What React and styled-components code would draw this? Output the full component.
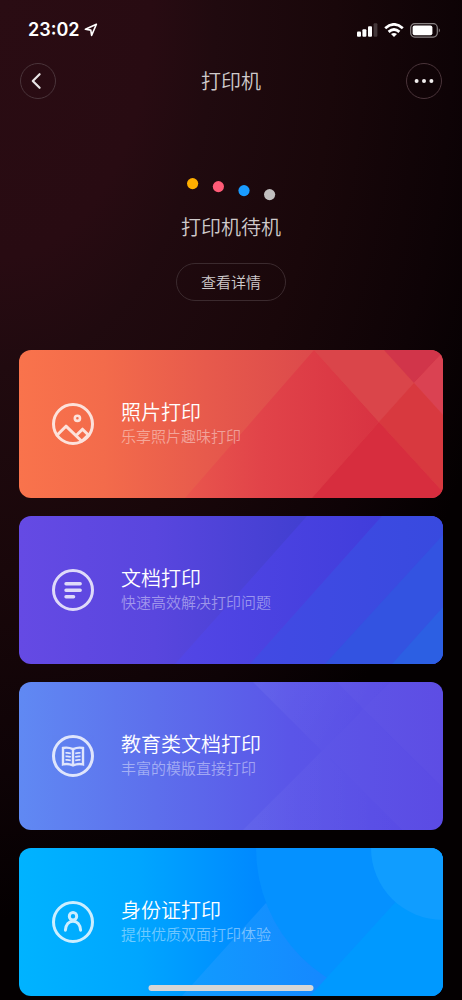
import React from 'react';
import styled, { createGlobalStyle } from 'styled-components';

const GlobalStyle = createGlobalStyle`
    * {
        box-sizing: border-box;
    }

    body {
        margin: 0;
        background-color: #040001;
    }

    button {
        font-family: inherit;
        cursor: pointer;
    }
`;

const Page = styled.div`
    min-height: 100vh;
    overflow: hidden;
    color: #cfcacb;
    font-family: 'Noto Sans CJK SC', 'Noto Sans', sans-serif;
    font-weight: 350;
    background: radial-gradient(
        540px 920px at 0 0,
        #2a0c13 0%,
        #280b12 28%,
        #200a0f 40%,
        #19070a 62%,
        #0e0306 84%,
        #040001 100%
    );
`;

const StatusBar = styled.div`
    display: flex;
    align-items: center;
    justify-content: space-between;
    height: 60px;
    padding: 0 21px 0 28px;
`;

const StatusGroup = styled.div`
    display: flex;
    align-items: center;
    gap: ${props => props.$gap};
`;

const Time = styled.span`
    color: #fff;
    font-family: Inter, sans-serif;
    font-size: 18px;
    font-weight: 600;
    line-height: 24px;
`;

const Header = styled.header`
    display: flex;
    align-items: center;
    justify-content: space-between;
    padding: 3px 20px 0;
`;

const Title = styled.h1`
    margin: 0;
    font-size: 20px;
    font-weight: 350;
    line-height: 32px;
`;

const RoundButton = styled.button`
    display: flex;
    align-items: center;
    justify-content: center;
    width: 36px;
    height: 36px;
    padding: 0;
    border: 1px solid #4a343a;
    border-radius: 50%;
    background: transparent;
`;

const PrinterState = styled.section`
    display: flex;
    flex-direction: column;
    align-items: center;
    padding-top: 78px;
`;

const StateText = styled.p`
    margin: 10px 0 20px;
    font-size: 20px;
    line-height: 32px;
`;

const DetailButton = styled.button`
    width: 110px;
    height: 38px;
    padding: 0 0 2px;
    border: 1px solid #3b2a2e;
    border-radius: 19px;
    background: transparent;
    color: inherit;
    font-size: 15px;
    font-weight: 350;
`;

const CardList = styled.main`
    display: flex;
    flex-direction: column;
    gap: 18px;
    padding: 49px 19px 4px;
`;

const Card = styled.button`
    position: relative;
    display: flex;
    align-items: center;
    gap: 26px;
    width: 100%;
    height: 148px;
    padding: 0 32px;
    border: 0;
    border-radius: 12px;
    overflow: hidden;
    background: ${props => props.$background};
    color: #fff;
    text-align: left;
`;

const CardArt = styled.svg`
    position: absolute;
    inset: 0;
    width: 100%;
    height: 100%;
`;

const CardIcon = styled.svg`
    position: relative;
    flex: none;
    width: 44px;
    height: 44px;
    fill: none;
    stroke: #fff;
    stroke-width: 3;
    stroke-linecap: round;
    stroke-linejoin: round;
    opacity: 0.8;
`;

const CardText = styled.span`
    position: relative;
    display: flex;
    flex-direction: column;
`;

const CardTitle = styled.span`
    font-size: 20px;
    font-weight: 350;
    line-height: 24px;
`;

const CardSubtitle = styled.span`
    color: rgba(255, 255, 255, 0.44);
    font-size: 15px;
    font-weight: 350;
    line-height: 24px;
`;

const HomeIndicator = styled.div`
    position: fixed;
    bottom: 9px;
    left: 50%;
    width: 165px;
    height: 6px;
    border-radius: 3px;
    background-color: #d6d6d6;
    transform: translateX(-50%);
`;

const LocationIcon = () => (
    <svg width="14" height="14" viewBox="0 0 14 14" fill="none" stroke="#fff" strokeWidth="1.6" strokeLinejoin="round">
        <path d="M12.4 1.2 1.4 6.3 6.8 7.1 7.6 12.4Z" />
    </svg>
);

const SignalIcon = () => (
    <svg width="21" height="14" viewBox="0 0 21 14" fill="#fff">
        <rect x="0" y="8.5" width="4" height="5.2" rx="1" />
        <rect x="5.4" y="6.2" width="4" height="7.5" rx="1" />
        <rect x="11" y="3.2" width="4" height="10.5" rx="1" />
        <rect x="16.6" y="0.2" width="3.8" height="13.5" rx="1" fillOpacity="0.2" />
    </svg>
);

const WifiIcon = () => (
    <svg width="20" height="14" viewBox="0 0 20 14" fill="none" stroke="#fff" strokeWidth="2.8">
        <path d="M1.2 5.2Q10-2.4 18.8 5.2" />
        <path d="M4.6 8.9Q10 4.2 15.4 8.9" />
        <path d="M10 13.9 7 11.1Q10 8.8 13 11.1Z" fill="#fff" stroke="none" />
    </svg>
);

const BatteryIcon = () => (
    <svg width="31" height="15" viewBox="0 0 31 15">
        <rect x="0.7" y="0.7" width="26.6" height="13.4" rx="4" fill="none" stroke="#fff" strokeOpacity="0.5" strokeWidth="1.2" />
        <rect x="2.6" y="2.6" width="19.8" height="9.6" rx="2" fill="#fff" />
        <path d="M28.8 5.2Q31 7.4 28.8 9.6Z" fill="#fff" fillOpacity="0.5" />
    </svg>
);

const PhotoArt = () => (
    <CardArt viewBox="0 0 424 148" preserveAspectRatio="xMaxYMid slice">
        <defs>
            <linearGradient id="photoPeak" gradientUnits="userSpaceOnUse" x1="166" y1="0" x2="360" y2="0">
                <stop offset="0" stopColor="#e9564d" />
                <stop offset="0.4" stopColor="#e14349" />
                <stop offset="1" stopColor="#d83342" />
            </linearGradient>
        </defs>
        <path d="M166 148 295 0 360 72 293 148Z" fill="url(#photoPeak)" />
        <path d="M295 0H365L395 33 360 72Z" fill="#da454a" />
        <path d="M365 0H426L395 33Z" fill="#d1354a" />
        <path d="M424 2V65L395 33Z" fill="#da4252" />
        <path d="M395 33 424 65V142L360 72Z" fill="#d8393f" />
        <path d="M360 72 424 142V148H293Z" fill="#d72d3e" />
    </CardArt>
);

const DocumentArt = () => (
    <CardArt viewBox="0 0 424 148" preserveAspectRatio="xMaxYMid slice">
        <defs>
            <linearGradient id="documentBand" gradientUnits="userSpaceOnUse" x1="156" y1="0" x2="363" y2="0">
                <stop offset="0" stopColor="#5346e6" />
                <stop offset="1" stopColor="#403ddb" />
            </linearGradient>
            <linearGradient id="documentBandWide" gradientUnits="userSpaceOnUse" x1="231" y1="0" x2="424" y2="0">
                <stop offset="0" stopColor="#424ae4" />
                <stop offset="1" stopColor="#384adf" />
            </linearGradient>
        </defs>
        <path d="M288 0H424V148H156Z" fill="url(#documentBand)" />
        <path d="M363 0H424V148H231Z" fill="url(#documentBandWide)" />
        <path d="M424 19V148H306Z" fill="#3353e1" />
        <path d="M424 91V148H373Z" fill="#2c5fe3" />
    </CardArt>
);

const EducationArt = () => (
    <CardArt viewBox="0 0 424 148" preserveAspectRatio="xMaxYMid slice">
        <defs>
            <linearGradient id="educationTop" gradientUnits="userSpaceOnUse" x1="234" y1="0" x2="344" y2="60">
                <stop offset="0" stopColor="#fff" stopOpacity="0.05" />
                <stop offset="1" stopColor="#fff" stopOpacity="0" />
            </linearGradient>
            <linearGradient id="educationBottom" gradientUnits="userSpaceOnUse" x1="224" y1="148" x2="383" y2="148">
                <stop offset="0" stopColor="#fff" stopOpacity="0.04" />
                <stop offset="1" stopColor="#fff" stopOpacity="0" />
            </linearGradient>
        </defs>
        <path d="M234 0H371L303 69Z" fill="url(#educationTop)" />
        <path d="M224 148 303 69 383 148Z" fill="url(#educationBottom)" />
        <path d="M303 69 344 27 424 106V148H383Z" fill="#fff" fillOpacity="0.02" />
        <path d="M318 0H371L344 27Z" fill="#fff" fillOpacity="0.02" />
        <path d="M344 27 371 0H424V106Z" fill="#fff" fillOpacity="0.03" />
    </CardArt>
);

const IdentityArt = () => (
    <CardArt viewBox="0 0 424 148" preserveAspectRatio="xMaxYMid slice">
        <defs>
            <linearGradient id="identitySlope" gradientUnits="userSpaceOnUse" x1="163" y1="0" x2="300" y2="0">
                <stop offset="0" stopColor="#119cff" />
                <stop offset="1" stopColor="#1589ff" />
            </linearGradient>
        </defs>
        <path d="M163 148 247 55 308 110V148Z" fill="url(#identitySlope)" />
        <circle cx="391" cy="0" r="154" fill="#0591ff" />
        <path d="M291 148 424 2V148Z" fill="#0099ff" />
        <circle cx="424" cy="0" r="72" fill="#109dff" />
    </CardArt>
);

const PhotoGlyph = () => (
    <>
        <circle cx="26.4" cy="16.3" r="2.6" strokeWidth="2.6" />
        <path d="M6.2 33 15 24.2 30.5 39" />
        <path d="M26.4 32.2 31.5 27.2 37.4 33M37 33.4 31 39" />
    </>
);

const DocumentGlyph = () => (
    <path d="M15 15.8H29.2M15 22.2H29.2M15 28.8H22.6" strokeWidth="3.4" />
);

const BookGlyph = () => (
    <g strokeWidth="2.4" strokeLinecap="butt" strokeLinejoin="miter">
        <path d="M22 15.2Q17 12.8 12 14V30.4Q17 29.2 22 31.4Q27 29.2 32 30.4V14Q27 12.8 22 15.2V31" />
        <path d="M14.5 18.9Q17.5 18.5 19.8 19.5M14.5 22.4Q17.5 22 19.8 23M14.5 25.9Q17.5 25.5 19.8 26.5" strokeWidth="1.8" />
        <path d="M29.5 18.9Q26.5 18.5 24.2 19.5M29.5 22.4Q26.5 22 24.2 23M29.5 25.9Q26.5 25.5 24.2 26.5" strokeWidth="1.8" />
    </g>
);

const PersonGlyph = () => (
    <>
        <circle cx="22" cy="16.3" r="3.7" />
        <path d="M14.4 30.2C14.8 24.6 18 21.2 22 21.2S29.2 24.6 29.6 30.2" />
    </>
);

const PRINT_OPTIONS = [
    {
        title: '照片打印',
        subtitle: '乐享照片趣味打印',
        background: 'linear-gradient(90deg, #f9734c 0%, #f36b4b 20%, #e75a4c 44%, #db484b 72%)',
        Art: PhotoArt,
        Glyph: PhotoGlyph,
    },
    {
        title: '文档打印',
        subtitle: '快速高效解决打印问题',
        background: 'linear-gradient(90deg, #654ae4 0%, #5946de 32%, #423fd1 66%)',
        Art: DocumentArt,
        Glyph: DocumentGlyph,
    },
    {
        title: '教育类文档打印',
        subtitle: '丰富的模版直接打印',
        background: 'linear-gradient(90deg, #6089f3 0%, #5d6fec 32%, #5a55e8 64%, #5848e4 100%)',
        Art: EducationArt,
        Glyph: BookGlyph,
    },
    {
        title: '身份证打印',
        subtitle: '提供优质双面打印体验',
        background: 'linear-gradient(90deg, #00b3ff 0%, #00a6ff 28%, #0089ff 56%)',
        Art: IdentityArt,
        Glyph: PersonGlyph,
    },
];

const App = () => {
    return (
        <Page>
            <GlobalStyle />
            <StatusBar>
                <StatusGroup $gap="4px">
                    <Time>23:02</Time>
                    <LocationIcon />
                </StatusGroup>
                <StatusGroup $gap="6px">
                    <SignalIcon />
                    <WifiIcon />
                    <BatteryIcon />
                </StatusGroup>
            </StatusBar>
            <Header>
                <RoundButton aria-label="返回">
                    <svg width="18" height="18" viewBox="0 0 18 18" fill="none" stroke="#e9e5e6" strokeWidth="2.2" strokeLinecap="round" strokeLinejoin="round">
                        <path d="M10.6 2.2 3.8 9 10.6 15.8" />
                    </svg>
                </RoundButton>
                <Title>打印机</Title>
                <RoundButton aria-label="更多">
                    <svg width="20" height="6" viewBox="0 0 20 6" fill="#f1eeee">
                        <circle cx="2.6" cy="3" r="2" />
                        <circle cx="10" cy="3" r="2" />
                        <circle cx="17.4" cy="3" r="2" />
                    </svg>
                </RoundButton>
            </Header>
            <PrinterState>
                <svg width="90" height="24" viewBox="0 0 90 24">
                    <circle cx="6.6" cy="6.6" r="5.6" fill="#ffaf00" />
                    <circle cx="32.4" cy="9.6" r="5.6" fill="#ff5b77" />
                    <circle cx="58" cy="13.6" r="5.6" fill="#1a9cff" />
                    <circle cx="83.6" cy="17.6" r="5.6" fill="#c1bfbf" />
                </svg>
                <StateText>打印机待机</StateText>
                <DetailButton>查看详情</DetailButton>
            </PrinterState>
            <CardList>
                {PRINT_OPTIONS.map(({ title, subtitle, background, Art, Glyph }) => (
                    <Card key={title} $background={background}>
                        <Art />
                        <CardIcon viewBox="0 0 44 44">
                            <circle cx="22" cy="22" r="19.5" />
                            <Glyph />
                        </CardIcon>
                        <CardText>
                            <CardTitle>{title}</CardTitle>
                            <CardSubtitle>{subtitle}</CardSubtitle>
                        </CardText>
                    </Card>
                ))}
            </CardList>
            <HomeIndicator />
        </Page>
    );
};

export default App;
